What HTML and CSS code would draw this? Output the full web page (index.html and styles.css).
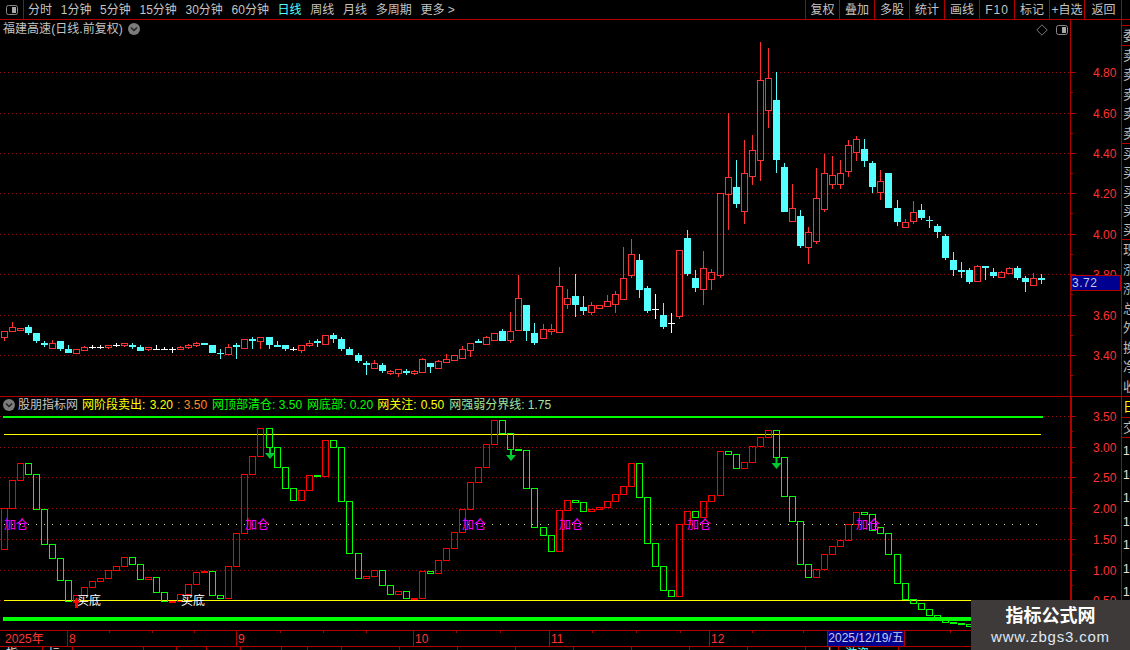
FILE: index.html
```html
<!DOCTYPE html>
<html lang="zh-CN">
<head>
<meta charset="utf-8">
<title>福建高速 日线</title>
<link rel="stylesheet" href="styles.css">
</head>
<body>
<div class="app">
  <header class="toolbar">
    <div class="layout-cell">
      <svg class="ic" width="14" height="12" viewBox="0 0 14 12"><rect x="1.5" y="1.5" width="11" height="9" rx="2" class="ic-frame"/><rect x="7" y="3" width="4" height="6" class="ic-fill"/></svg>
    </div>
    <nav class="periods">
      <span>分时</span><span>1分钟</span><span>5分钟</span><span>15分钟</span><span>30分钟</span><span>60分钟</span>
      <span class="active">日线</span><span>周线</span><span>月线</span><span>多周期</span><span>更多 &gt;</span>
    </nav>
    <div class="actions">
      <span>复权</span><span>叠加</span><span>多股</span><span>统计</span><span>画线</span><span class="f10">F10</span><span>标记</span><span>+自选</span><span class="last">返回</span>
    </div>
  </header>
  <div class="workspace">
    <main class="charts">
      <section class="pane pane-price">
        <svg id="price" class="chart" viewBox="0 20 1121 376" width="1121" height="376"></svg>
        <div class="pane-title">
          <span class="title-text">福建高速 (日线.前复权)</span>
          <svg class="ic" width="14" height="14" viewBox="0 0 14 14"><circle cx="7" cy="7" r="6" class="circle"/><path d="M4 5.5 7 8.5 10 5.5" class="chev"/></svg>
        </div>
        <div class="pane-tools">
          <svg width="12" height="12" viewBox="0 0 12 12"><path d="M6 .8 11.2 6 6 11.2 .8 6Z" class="diamond"/></svg>
          <svg width="14" height="12" viewBox="0 0 14 12"><rect x="1.5" y="1.5" width="11" height="9" rx="2" class="ic-frame"/><rect x="7" y="3" width="4" height="6" class="ic-fill"/></svg>
        </div>
      </section>
      <section class="pane pane-ind">
        <svg id="ind" class="chart" viewBox="0 397 1121 233" width="1121" height="233"></svg>
        <div class="legend">
          <svg class="ic" width="14" height="14" viewBox="0 0 14 14"><circle cx="7" cy="7" r="6" class="circle"/><path d="M4 5.5 7 8.5 10 5.5" class="chev"/></svg>
          <span class="gray">股朋指标网</span>
          <span class="yellow">网阶段卖出: 3.20</span>
          <span class="orange">: 3.50</span>
          <span class="green">网顶部清仓: 3.50</span>
          <span class="green">网底部: 0.20</span>
          <span class="yellow tight">网关注: 0.50</span>
          <span class="pale">网强弱分界线: 1.75</span>
        </div>
      </section>
      <div class="time-axis">
        <svg id="time" class="chart" viewBox="0 631 1121 15" width="1121" height="15"></svg>
        <div class="date-tip">2025/12/19/五</div>
      </div>
      <div class="tabs">
        <span>指</span><span></span><span class="short">标</span><span></span><span></span><span></span><span></span><span></span><span></span><span></span>
        <span></span><span></span><span></span><span></span><span></span><span></span><span></span><span></span><span class="lit">上</span><span class="cy">游资</span>
      </div>
    </main>
    <aside class="side">
      <div class="side-gap"></div>
      <div class="group g-head"><div>委比</div></div>
      <div class="group g-5"><div>卖五</div><div>卖四</div><div>卖三</div><div>卖二</div><div>卖一</div></div>
      <div class="group g-5b"><div>买一</div><div>买二</div><div>买三</div><div>买四</div><div>买五</div></div>
      <div class="group g-7"><div>现价</div><div>涨跌</div><div>涨幅</div><div>总量</div><div>外盘</div><div>换手</div><div>净资</div><div>收益</div></div>
      <div class="group g-y"><div class="yellow">日</div></div>
      <div class="group g-j"><div>交易</div></div>
      <div class="group g-nums"><div>14</div><div>14</div><div>14</div><div>14</div><div>14</div><div>14</div><div>14</div><div>14</div><div>14</div></div>
    </aside>
  </div>
  <div class="brand">
    <div class="brand-name">指标公式网</div>
    <div class="brand-url">www.zbgs3.com</div>
  </div>
</div>
<script src="chart.js"></script>
</body>
</html>
```
FILE: styles.css
```css
* { box-sizing: border-box; }
html, body { margin: 0; padding: 0; background: #000; }
body { font: 12px/14px "Liberation Sans", "Noto Sans CJK SC", sans-serif; color: #c4c4c4; overflow: hidden; }
.app { position: relative; width: 1130px; height: 650px; overflow: hidden; background: #000; }

.toolbar { display: flex; align-items: stretch; height: 20px; border-bottom: 1px solid #b00000; }
.layout-cell { width: 24px; display: flex; align-items: center; justify-content: center; border-right: 1px solid #b00000; }
.ic { display: block; }
.ic-frame { fill: none; stroke: #8a8a8a; }
.ic-fill { fill: #a8a8a8; }
.circle { fill: #7c7c7c; }
.chev { fill: none; stroke: #222; stroke-width: 1.5; }
.diamond { fill: none; stroke: #777; }
.periods { display: flex; align-items: center; gap: 8.7px; padding-left: 4px; }
.periods .active { color: #54ffff; }
.actions { display: flex; margin-left: auto; padding-right: 8px; }
.actions span { width: 35px; display: flex; align-items: center; justify-content: center; border-left: 1px solid #b00000; }
.actions span:first-child { width: 34px; }
.actions .last { width: 38px; border-right: 1px solid #b00000; padding-left: 1px; }
.actions .f10 { letter-spacing: 1px; }

.workspace { display: flex; height: 630px; }
.charts { width: 1121px; display: flex; flex-direction: column; }
.chart { display: block; }
.pane { position: relative; }
.pane-price { height: 377px; border-bottom: 1px solid #b00000; }
.pane-ind { height: 233px; }
.pane-title { position: absolute; left: 3px; top: 2px; display: flex; align-items: center; gap: 4px; }
.title-text { word-spacing: -3px; }
.pane-tools { position: absolute; left: 1036px; top: 4px; display: flex; align-items: center; gap: 7px; }
.legend { position: absolute; left: 2px; top: 1px; display: flex; align-items: center; gap: 5px; white-space: nowrap; }
.legend .ic { margin-right: -3px; }
.legend .gray { margin-right: -1px; }
.legend .yellow { word-spacing: 1px; }
.legend .tight { margin-left: -1px; }
.yellow { color: #ffff00; }
.orange { color: #ff8a20; margin-left: -1px; }
.green { color: #00ff00; }
.pale { color: #a4e4a0; }

.time-axis { position: relative; height: 17px; border-top: 1px solid #b00000; border-bottom: 1px solid #b00000; }
.date-tip { position: absolute; left: 827px; top: -1px; width: 78px; height: 17px; line-height: 15px; text-align: center; background: #000090; border: 1px solid #b00000; color: #c4c8ec; }
.tabs { height: 3px; display: grid; grid-template-columns: 43px 30px 42px 29px 33px 30px 34px 41px 26px 34px repeat(8, 58px) 33px 60px; overflow: hidden; }
.tabs span { border-right: 1px solid #b00000; padding: 1px 0 0 6px; line-height: 12px; color: #e0e0e0; height: 3px; overflow: hidden; }
.tabs .short { margin-left: -33px; padding-left: 8px; border-right: 0; }
.tabs .lit { padding-left: 18px; }
.tabs .cy { color: #54ffff; }

.side { width: 9px; border-left: 1px solid #b00000; display: flex; flex-direction: column; }
.side-gap { height: 5px; }
.group { display: flex; flex-direction: column; border-top: 1px solid #b00000; overflow: hidden; }
.group div { flex: 1; width: 8px; overflow: hidden; white-space: nowrap; padding: 3px 0 0 1px; line-height: 14px; color: #bcbcbc; font-size: 13px; }
.group .yellow { color: #ffff00; }
.g-head { height: 20px; }
.g-5 { height: 98px; }
.g-5b { height: 96px; }
.g-7 { height: 157px; }
.g-y { height: 21px; }
.g-j { height: 20px; }
.g-nums { flex: 1; }
.g-nums div { color: #e0e0e0; padding-top: 6px; font-size: 12px; }

.brand { position: absolute; left: 971px; top: 600px; width: 159px; height: 50px; background: #3e3a39; display: flex; flex-direction: column; align-items: center; }
.brand-name { margin-top: 5px; font-size: 18px; line-height: 22px; font-weight: 700; color: #fff; }
.brand-url { margin-top: 1px; font-size: 15px; line-height: 18px; color: #dfe8f4; letter-spacing: .8px; }

.grid { stroke: #9a0c0c; stroke-dasharray: 1 3; }
.axis-line { stroke: #b00000; }
.axis-text { fill: #ff3232; font-size: 12px; }
.tag-box { fill: #000090; stroke: #b00000; }
.tag-text { fill: #c4c8ec; font-size: 12px; letter-spacing: .5px; }
.up-line { stroke: #ff3232; fill: none; }
.down-fill { fill: #54ffff; }
.down-line { stroke: #54ffff; }
.flat-line { stroke: #fff; }
.bar-r { stroke: #ff0000; fill: none; }
.bar-g { stroke: #00ff00; fill: none; }
.line-green { fill: #00ff00; }
.line-yellow { stroke: #ffff00; }
.line-split { stroke: #c8f0a0; stroke-dasharray: 1 7; }
.mark-add { fill: #ff00ff; font-size: 12px; }
.mark-buy { fill: #fff; font-size: 12px; }
.arrow-up { fill: #ff0000; }
.arrow-down { fill: #00c832; }
```
FILE: chart.js
```js
// Candle column for bar i (the terminal's bar pitch is slightly over 8px).
function col(i) {
  var j = 0;
  [33, 44, 67, 89, 111].forEach(function (s) { if (i >= s) j++; });
  return Math.floor(4.3 + 8 * i + j);
}

// [kind, bodyTop, bodyBottom, high, low] in screen pixels
var candles = [
  ['r',331,337,331,341],['r',327,331,322,331],['r',328,330,328,331],['c',327,333,325,335],['c',333,341,333,343],
  ['c',343,345,341,347],['r',343,348,340,348],['c',341,349,341,351],['c',349,353,345,353],['r',349,353,349,354],
  ['r',347,350,346,351],['w',347,347,345,349],['w',347,347,345,349],['r',345,347,345,349],['w',345,345,343,347],
  ['r',343,345,343,347],['c',345,347,343,349],['c',347,351,345,351],['r',347,349,347,351],['w',349,349,345,350],
  ['w',349,349,347,350],['w',349,349,347,353],['r',347,349,346,349],['r',345,347,344,349],['r',343,345,342,347],
  ['c',343,345,343,345],['c',345,353,345,353],['c',353,354,349,359],['r',347,354,344,355],['c',345,347,343,359],
  ['r',339,348,339,349],['c',339,341,337,349],['r',337,341,337,349],['c',337,345,337,349],['c',345,347,341,347],
  ['c',345,349,345,351],['w',349,349,347,351],['r',345,350,345,353],['r',343,345,340,347],['c',341,343,339,347],
  ['r',335,344,335,345],['c',335,339,333,343],['c',339,349,337,351],['c',349,355,347,355],['c',355,361,353,363],
  ['c',363,365,361,375],['r',363,368,360,369],['c',365,371,363,373],['r',371,373,370,375],['r',369,373,369,377],
  ['c',371,373,369,375],['r',371,373,370,375],['r',359,372,358,372],['c',363,367,363,373],['r',361,368,360,368],
  ['r',359,362,354,363],['r',355,360,355,361],['r',349,358,346,359],['r',343,350,343,357],['c',341,343,339,343],
  ['r',337,344,336,344],['r',333,340,333,340],['c',331,341,329,341],['r',331,340,312,343],['r',298,330,275,330],
  ['c',305,331,305,341],['c',333,343,323,345],['r',329,338,324,338],['r',329,331,324,335],['r',286,332,267,333],
  ['r',298,304,289,309],['c',296,305,274,317],['c',307,311,296,315],['r',305,312,302,315],['r',305,308,305,309],
  ['r',301,306,295,306],['r',294,304,291,313],['r',278,299,247,299],['r',254,275,239,278],['c',260,290,254,298],
  ['c',288,311,286,313],['w',309,309,294,319],['c',315,327,303,329],['w',323,323,313,333],['r',250,316,250,319],
  ['c',238,274,230,276],['c',278,288,270,292],['r',268,289,251,305],['r',272,279,269,290],['r',193,275,193,278],
  ['r',177,194,113,230],['c',187,204,160,208],['r',173,211,140,224],['r',150,176,135,185],['r',80,160,42,181],
  ['r',78,110,48,128],['c',100,160,72,173],['c',167,212,163,212],['r',208,221,184,222],['c',216,246,210,248],
  ['r',232,247,227,264],['r',198,241,168,244],['r',173,209,154,212],['r',175,184,156,189],['r',173,184,160,189],
  ['r',145,171,140,177],['r',139,152,136,161],['c',149,161,139,167],['c',163,187,161,193],['r',181,192,170,200],
  ['c',173,208,173,208],['c',208,222,200,226],['r',222,227,219,228],['r',212,221,201,224],['c',210,218,204,220],
  ['c',220,221,216,228],['c',226,232,224,238],['c',236,258,234,260],['c',260,270,252,276],['c',270,272,262,278],
  ['c',270,282,268,284],['r',266,281,265,282],['c',266,268,266,280],['c',272,276,268,278],['r',272,277,271,277],
  ['r',268,273,267,274],['c',268,278,266,280],['c',278,282,276,292],['r',278,285,273,285],['c',278,280,274,284]
];

// [colour, top, bottom] hollow bars of the lower indicator
var bars = [
  ['r',508,549],['r',480,508],['r',463,480],['g',463,474],['g',474,509],['g',509,544],['g',544,558],['g',558,580],['g',580,601],['r',595,601],
  ['r',587,595],['r',581,587],['r',578,581],['r',570,578],['r',566,570],['r',557,566],['g',557,564],['g',564,579],['r',577,579],['g',577,592],
  ['g',592,601],['r',601,601],['r',594,601],['r',584,594],['r',572,584],['r',571,572],['g',571,595],['g',595,598],['r',566,598],['r',533,566],
  ['r',474,533],['r',456,474],['r',428,456],['g',428,447],['g',447,467],['g',467,488],['g',488,500],['r',490,500],['r',475,490],['g',475,476],
  ['r',440,476],['g',440,447],['g',447,501],['g',501,553],['g',553,578],['r',576,578],['r',570,576],['g',570,585],['g',585,594],['r',591,594],
  ['g',591,598],['r',598,598],['r',571,598],['g',571,573],['r',560,573],['r',548,560],['r',532,548],['r',509,532],['r',482,509],['r',467,482],
  ['r',444,467],['r',420,444],['g',420,433],['g',433,449],['g',449,450],['g',450,488],['g',488,527],['g',527,535],['g',535,551],['r',510,551],
  ['r',500,510],['g',500,502],['g',502,511],['r',509,511],['r',507,509],['r',501,507],['r',494,501],['r',486,494],['r',463,486],['g',463,497],
  ['g',497,543],['g',543,566],['g',566,590],['g',590,596],['r',524,596],['r',511,524],['g',511,517],['r',501,517],['r',495,501],['r',451,495],
  ['g',451,454],['g',454,468],['r',462,468],['r',446,462],['r',437,446],['r',430,437],['g',430,457],['g',457,496],['g',496,521],['g',521,564],
  ['g',564,577],['r',569,577],['r',554,569],['r',546,554],['r',540,546],['r',524,540],['r',512,524],['g',512,514],['g',514,530],['g',527,533],
  ['g',533,554],['g',554,583],['g',583,599],['g',599,603],['g',603,609],['g',609,615],['g',615,617],['g',620,622],['g',622,622],['g',623,623],['g',624,626]
];

function line(x1, y1, x2, y2, cls) {
  return '<line x1="' + x1 + '" y1="' + y1 + '" x2="' + x2 + '" y2="' + y2 + '" class="' + cls + '" shape-rendering="crispEdges"/>';
}
function rect(x, y, w, h, cls) {
  return '<rect x="' + x + '" y="' + y + '" width="' + w + '" height="' + h + '" class="' + cls + '" shape-rendering="crispEdges"/>';
}
function text(x, y, s, cls) {
  return '<text x="' + x + '" y="' + y + '" class="' + cls + '">' + s + '</text>';
}
function axis(labels, top, bottom, width, step) {
  var out = '';
  for (var i = 0; i < width; i++) {
    out += line(1070.5 + i, top, 1070.5 + i, bottom, 'axis-line');
  }
  labels.forEach(function (l) {
    out += line(0, l[1] + 0.5, 1069, l[1] + 0.5, 'grid');
    out += line(1071, l[1] + 0.5, 1076, l[1] + 0.5, 'axis-line');
    out += line(1071, Math.round(l[1] + step / 2) + 0.5, 1073, Math.round(l[1] + step / 2) + 0.5, 'axis-line');
    out += text(1093, l[1] + 4.5, l[0], 'axis-text');
  });
  return out;
}

// --- price pane ---
var p = axis([['4.80',72],['4.60',113],['4.40',153],['4.20',193],['4.00',234],['3.80',274],['3.60',315],['3.40',355]], 20, 396, 1, 40.4);
candles.forEach(function (c, i) {
  var x = col(i), cx = x + 0.5, k = c[0], t = c[1], b = c[2], hi = c[3], lo = c[4];
  if (k === 'r') {
    if (hi < t) p += line(cx, hi, cx, t, 'up-line');
    if (lo > b) p += line(cx, b, cx, lo, 'up-line');
    p += rect(x - 3 + 0.5, t + 0.5, 6, Math.max(b - t, 1), 'up-line');
  } else if (k === 'c') {
    p += line(cx, hi, cx, lo, 'down-line');
    p += rect(x - 3, t, 7, Math.max(b - t, 1), 'down-fill');
  } else {
    p += line(cx, hi, cx, lo, 'flat-line');
    p += line(x - 3, t + 0.5, x + 4, t + 0.5, 'flat-line');
  }
});
p += rect(1071.5, 275.5, 49, 15, 'tag-box') + text(1072, 287, '3.72', 'tag-text');
document.getElementById('price').innerHTML = p;

// --- indicator pane ---
var q = axis([['3.50',416],['3.00',447],['2.50',477],['2.00',508],['1.50',539],['1.00',570],['0.50',600]], 397, 630, 2, 30.8);
q += rect(3, 416, 1040, 2, 'line-green');
q += line(4, 434.5, 1041, 434.5, 'line-yellow');
q += line(4, 600.5, 1041, 600.5, 'line-yellow');
q += rect(3, 617, 1040, 4, 'line-green');
q += line(4, 524.5, 1041, 524.5, 'line-split');
bars.forEach(function (b, i) {
  var x = col(i);
  q += rect(x - 3 + 0.5, b[1] + 0.5, 6, Math.max(b[2] - b[1], 1), b[0] === 'r' ? 'bar-r' : 'bar-g');
});
[4, 245, 462, 559, 687, 856].forEach(function (x) { q += text(x, 529, '加仓', 'mark-add'); });
[77, 181].forEach(function (x) { q += text(x, 605, '买底', 'mark-buy'); });
q += '<path class="arrow-up" d="M76.5 597.5 80 603H78V608H75V603H73Z"/>';
[[270, 448], [511, 450], [776.5, 458]].forEach(function (a) {
  var x = a[0], y = a[1];
  q += '<path class="arrow-down" d="M' + (x - 1) + ' ' + y + 'h2v5h4l-5 6-5-6h4z"/>';
});
document.getElementById('ind').innerHTML = q;

// --- time axis ---
var t = '';
t += text(5, 643, '2025年', 'axis-text');
[[67, '8'], [236, '9'], [413, '10'], [549, '11'], [709, '12']].forEach(function (m) {
  t += line(m[0] + 0.5, 631, m[0] + 0.5, 646, 'axis-line');
  t += text(m[0] + 2, 643, m[1], 'axis-text');
});
[109, 152, 194, 280, 323, 366, 456, 500, 592, 636, 680, 752, 803, 950, 1000].forEach(function (x) {
  t += line(x + 0.5, 631, x + 0.5, 633, 'axis-line');
});
document.getElementById('time').innerHTML = t;
```
